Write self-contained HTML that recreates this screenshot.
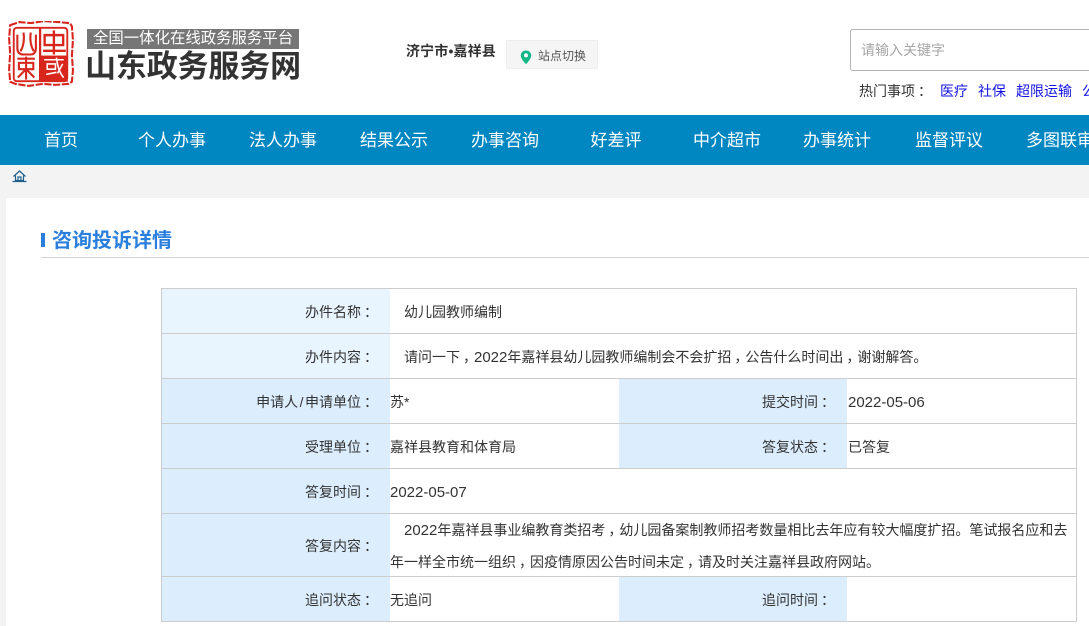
<!DOCTYPE html>
<html lang="zh-CN">
<head>
<meta charset="utf-8">
<title>咨询投诉详情</title>
<style>
html,body{margin:0;padding:0;background:#fff;}
body{width:1089px;height:626px;overflow:hidden;position:relative;font-family:"Liberation Sans","Microsoft YaHei","Noto Sans CJK SC",sans-serif;color:#333;}
.a{position:absolute;white-space:nowrap;}
.nav{position:absolute;left:0;top:115px;width:1089px;height:50px;background:#0086c1;}
.nav span{position:absolute;top:0;line-height:52px;font-size:17px;color:#fff;width:112px;text-align:center;white-space:nowrap;}
.lb{position:absolute;background:#e8f4fe;}
.lb2{position:absolute;background:#dcedfd;}
.hl{position:absolute;left:161px;width:916px;height:1px;background:#ccc;}
.t{position:absolute;white-space:nowrap;font-size:14px;color:#333;line-height:20px;}
.r{text-align:right;}
.c{position:relative;left:3px;}
.m{position:relative;left:3px;}
.n{font-size:15px;}
.hot{font-size:14px;line-height:20px;color:#1212e6;}
</style>
</head>
<body>

<!-- seal logo -->
<svg class="a" style="left:5px;top:21px" width="70" height="67" viewBox="2 4 68 64" preserveAspectRatio="none">
  <path d="M7 8l9-3 11 1 13-2 14 1 11 1 2 3 1 13-1 15 1 14-1 11-3 2-13 1-12-1-14 2-13-2-5-2-1-12 1-15-1-14z" fill="none" stroke="#d8261d" stroke-width="2" stroke-dasharray="7 1.500"/>
  <rect x="10.500" y="10.500" width="52" height="51" rx="3" fill="#fff" stroke="#d8261d" stroke-width="1.800"/>
  <rect x="36" y="37" width="27" height="25" fill="#d8261d"/>
  <rect x="35" y="10" width="2.200" height="52" fill="#d8261d"/>
  <g fill="none" stroke="#d8261d" stroke-width="2">
    <path d="M14 17v13c0 4 2 6 6 6h7c3 0 5-2 5-6V17M20 15c1 7 0 13-3 18M27 15c-1 7 0 13 3 18"/>
    <path d="M14 40h17M15.500 44h14v6h-14zM22.500 38v22M22.500 50l-8 8M22.500 50l8 8"/>
  </g>
  <g fill="none" stroke="#d8261d" stroke-width="2.300">
    <path d="M40.500 17.500h18v9.500h-18zM49.500 13v23"/>
    <path d="M39 32.500h22"/>
  </g>
  <g fill="none" stroke="#fff" stroke-width="1.500">
    <path d="M40 41h19M43 45h8v5h-8zM42 55l10-2M52 39c1 8 3 15 7 19M58 45l-5 9"/>
  </g>
</svg>

<!-- logo text -->
<div class="a" style="left:87px;top:29px;width:212px;height:20px;background:#767676;"></div>
<div class="a" style="left:93px;top:29px;font-size:15.400px;line-height:20px;color:#fff;">全国一体化在线政务服务平台</div>
<div class="a" style="left:85px;top:49px;font-size:31px;line-height:36px;font-weight:bold;color:#333;letter-spacing:-.15px;">山东政务服务网</div>

<!-- site -->
<div class="a" style="left:406px;top:41px;font-size:14px;line-height:20px;font-weight:bold;color:#333;letter-spacing:.15px;">济宁市•嘉祥县</div>
<div class="a" style="left:506px;top:40px;width:90px;height:27px;background:#f5f5f5;border:1px solid #eee;"></div>
<svg class="a" style="left:520px;top:50px" width="12" height="15" viewBox="0 0 12 15">
  <path d="M6 .5C2.800.5.800 2.900.800 5.500c0 3.300 3.400 6.600 5.200 8.800 1.800-2.200 5.200-5.500 5.200-8.800C11.200 2.900 9.200.5 6 .5z" fill="#12b886"/>
  <circle cx="6" cy="5.400" r="2" fill="#fff"/>
</svg>
<div class="a" style="left:538px;top:46px;font-size:12px;line-height:20px;color:#555;">站点切换</div>

<!-- search -->
<div class="a" style="left:850px;top:29px;width:260px;height:40px;border:1px solid #b3b3b3;border-radius:3px;background:#fff;"></div>
<div class="a" style="left:861px;top:40px;font-size:14px;line-height:20px;color:#a6a6a6;">请输入关键字</div>
<div class="a" style="left:859px;top:81px;font-size:14px;line-height:20px;color:#333;">热门事项<span class="c">：</span></div>
<div class="a hot" style="left:940px;top:81px;">医疗</div>
<div class="a hot" style="left:978px;top:81px;">社保</div>
<div class="a hot" style="left:1016px;top:81px;">超限运输</div>
<div class="a hot" style="left:1082px;top:81px;">公积金</div>

<!-- nav -->
<div class="nav">
  <span style="left:5px">首页</span>
  <span style="left:116px">个人办事</span>
  <span style="left:227px">法人办事</span>
  <span style="left:338px">结果公示</span>
  <span style="left:449px">办事咨询</span>
  <span style="left:560px">好差评</span>
  <span style="left:671px">中介超市</span>
  <span style="left:781px">办事统计</span>
  <span style="left:893px">监督评议</span>
  <span style="left:1004px">多图联审</span>
</div>

<!-- breadcrumb bar -->
<div class="a" style="left:0;top:165px;width:1089px;height:33px;background:#f3f3f3;"></div>
<div class="a" style="left:0;top:198px;width:6px;height:428px;background:#f3f3f3;"></div>
<svg class="a" style="left:12px;top:170px" width="15" height="13" viewBox="0 0 15 13">
  <path d="M1.500 6.500L7.500 1l6 5.500M3.500 5.500V10.500h8V5.500M6 10.500V7h3v3.500M.5 11.500h14" fill="none" stroke="#1f5f8c" stroke-width="1.200"/>
</svg>

<!-- heading -->
<div class="a" style="left:41px;top:233px;width:4px;height:14px;background:#2b7fdc;"></div>
<div class="a" style="left:52px;top:227px;font-size:20px;line-height:28px;font-weight:bold;color:#2b7fdc;">咨询投诉详情</div>
<div class="a" style="left:41px;top:257px;width:1048px;height:1px;background:#d2d2d2;"></div>

<!-- table backgrounds -->
<div class="lb" style="left:162px;top:289px;width:228px;height:89px;"></div>
<div class="lb2" style="left:162px;top:379px;width:228px;height:242px;"></div>
<div class="lb2" style="left:619px;top:379px;width:228px;height:89px;"></div>
<div class="lb2" style="left:619px;top:577px;width:228px;height:44px;"></div>

<!-- table lines -->
<div class="hl" style="top:288px"></div>
<div class="hl" style="top:333px"></div>
<div class="hl" style="top:378px"></div>
<div class="hl" style="top:423px"></div>
<div class="hl" style="top:468px"></div>
<div class="hl" style="top:513px"></div>
<div class="hl" style="top:576px"></div>
<div class="hl" style="top:621px"></div>
<div class="a" style="left:161px;top:288px;width:1px;height:334px;background:#ccc;"></div>
<div class="a" style="left:1076px;top:288px;width:1px;height:334px;background:#ccc;"></div>

<!-- labels -->
<div class="t r" style="left:162px;width:213px;top:302px;">办件名称<span class="c">：</span></div>
<div class="t r" style="left:162px;width:213px;top:347px;">办件内容<span class="c">：</span></div>
<div class="t r" style="left:162px;width:213px;top:392px;">申请人<span style="margin:0 1.500px">/</span>申请单位<span class="c">：</span></div>
<div class="t r" style="left:162px;width:213px;top:437px;">受理单位<span class="c">：</span></div>
<div class="t r" style="left:162px;width:213px;top:482px;">答复时间<span class="c">：</span></div>
<div class="t r" style="left:162px;width:213px;top:536px;">答复内容<span class="c">：</span></div>
<div class="t r" style="left:162px;width:213px;top:590px;">追问状态<span class="c">：</span></div>
<div class="t r" style="left:619px;width:213px;top:392px;">提交时间<span class="c">：</span></div>
<div class="t r" style="left:619px;width:213px;top:437px;">答复状态<span class="c">：</span></div>
<div class="t r" style="left:619px;width:213px;top:590px;">追问时间<span class="c">：</span></div>

<!-- values -->
<div class="t" style="left:404px;top:302px;">幼儿园教师编制</div>
<div class="t" style="left:404px;top:347px;">请问一下<span class="m">，</span><span class="n">2022</span>年嘉祥县幼儿园教师编制会不会扩招<span class="m">，</span>公告什么时间出<span class="m">，</span>谢谢解答。</div>
<div class="t" style="left:390px;top:392px;">苏*</div>
<div class="t n" style="left:848px;top:393px;">2022-05-06</div>
<div class="t" style="left:390px;top:437px;">嘉祥县教育和体育局</div>
<div class="t" style="left:848px;top:437px;">已答复</div>
<div class="t n" style="left:390px;top:483px;">2022-05-07</div>
<div class="t" style="left:404px;top:520px;"><span class="n">2022</span>年嘉祥县事业编教育类招考<span class="m">，</span>幼儿园备案制教师招考数量相比去年应有较大幅度扩招。笔试报名应和去</div>
<div class="t" style="left:390px;top:552px;">年一样全市统一组织<span class="m">，</span>因疫情原因公告时间未定<span class="m">，</span>请及时关注嘉祥县政府网站。</div>
<div class="t" style="left:390px;top:590px;">无追问</div>

</body>
</html>
